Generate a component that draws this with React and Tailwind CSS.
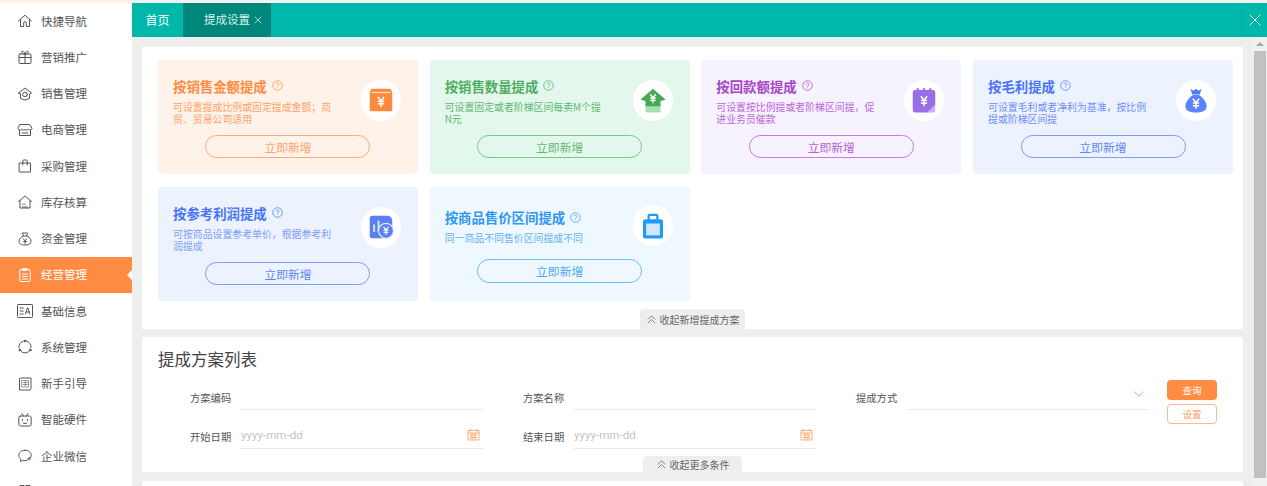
import { ChevronDown, X } from "lucide-react";

const Svg = ({ children, size = 16, vb = "0 0 16 16", stroke = "currentColor" }) => (
  <svg width={size} height={size} viewBox={vb} fill="none" stroke={stroke} strokeWidth="1" strokeLinejoin="round" strokeLinecap="round">
    {children}
  </svg>
);

// 菜单图标
const menuIcons = {
  home: <><path d="M1.500 8 8 2.200 14.500 8" /><path d="M3.500 6.800v6.700h3.200V10a1.300 1.300 0 0 1 2.600 0v3.500h3.200V6.800" /></>,
  gift: <><rect x="2" y="5" width="12" height="9.500" rx="1" /><path d="M2 8.500h12M8 5v9.500" /><path d="M8 5C6 5 4.600 4.200 4.600 3s2.400-1.600 3.400 2c1-3.600 3.400-3.200 3.400-2S10 5 8 5Z" /></>,
  sale: <><path d="M1.500 7 8 2l6.500 5-2 1v4.500L8 14l-4.500-1.500V8Z" /><circle cx="8" cy="8.500" r="2.300" /></>,
  store: <><path d="M3.200 2.500h9.600L15 6.500a2 2 0 0 1-3.500.8 2.600 2.600 0 0 1-3.500.2 2.600 2.600 0 0 1-3.500-.2A2 2 0 0 1 1 6.500Z" /><path d="M2.500 8v5.500h11V8M5 11h6" /></>,
  bag: <><path d="M2.500 5h11v9h-11Z" /><path d="M5.800 7V3a1 1 0 0 1 1-1h2.400a1 1 0 0 1 1 1v4" /></>,
  stock: <><path d="M1.500 7.500 8 2l6.500 5.500" /><path d="M3 6.500V14h10V6.500" /><path d="M6 13.500v-1M8 13.500v-1M10 13.500v-1M6 10.500v-.5M8 10.500v-.5" /></>,
  money: <><path d="M5.500 2h5L9.600 5c3 1 4.400 3.200 4.400 5.400 0 2.400-2 3.600-6 3.600s-6-1.200-6-3.600C2 8.200 3.400 6 6.400 5Z" /><path d="M6.500 5h3M6.300 7.800 8 9.800l1.700-2M8 9.800v2.500M6.500 10.500h3" /></>,
  clip: <><rect x="2.800" y="2.500" width="10.400" height="12" rx="1.200" /><path d="M6 1.500h4v2H6ZM5.500 7h5M5.500 9.500h5M5.500 12h5" /></>,
  info: <><rect x="0.500" y="1.500" width="15" height="13" rx="0.800" /><path d="M3 5h3.300M3 8h3.300M3 11h3.300M8.500 11l1.800-6h.7l1.800 6M9.200 9h3.400" /></>,
  sys: <><path d="M10 2.300A6 6 0 0 1 14 8.500M12 12.500a6 6 0 0 1-8 0M2 8.500A6 6 0 0 1 6 2.300" /><circle cx="8" cy="2" r="0.900" fill="currentColor" /><circle cx="2.800" cy="11" r="0.900" fill="currentColor" /><circle cx="13.200" cy="11" r="0.900" fill="currentColor" /></>,
  guide: <><path d="M3.500 2h10.500v10.500L13 14H2.500V3Z" /><rect x="5" y="4.500" width="6.500" height="6.500" strokeWidth="0.600" /><path d="M6 6.500h4.500M6 8.500h4.500M8.200 5.500v4.500" strokeWidth="0.600" /></>,
  tv: <><rect x="1.800" y="4" width="12.400" height="10" rx="1.800" /><path d="M5 1.500 6.500 4M11 1.500 9.500 4M5.500 7.500v1M10.500 7.500v1M6 11c1.200.8 2.800.8 4 0" /></>,
  chat: <><path d="M8 2.200c3.600 0 6.200 2.200 6.200 5 0 1-.3 1.800-.9 2.600M10 12.300c-.7.200-1.300.3-2 .3-.8 0-1.500-.1-2.200-.3l-2.300 1.200.3-2.300C2.600 10.200 1.800 8.800 1.800 7.200c0-2.800 2.600-5 6.200-5" /><path d="M11 10.700a1.100 1.100 0 1 0 2.200 0 1.100 1.100 0 1 0-2.200 0" /></>,
  more: <><path d="M3 4.500v-3h4M13 4.500v-3H9" /></>,
};

const menus = [
  ["home", "快捷导航"],
  ["gift", "营销推广"],
  ["sale", "销售管理"],
  ["store", "电商管理"],
  ["bag", "采购管理"],
  ["stock", "库存核算"],
  ["money", "资金管理"],
  ["clip", "经营管理"],
  ["info", "基础信息"],
  ["sys", "系统管理"],
  ["guide", "新手引导"],
  ["tv", "智能硬件"],
  ["chat", "企业微信"],
];

const Yen = ({ x = 12, y = 12, s = 1, color = "#fff" }) => (
  <path
    transform={`translate(${x} ${y}) scale(${s})`}
    d="M-2.500 -4 0 -.8 2.500 -4M-2.500 -.6h5M-2.500 1.500h5M0 -.8V4"
    stroke={color}
    strokeWidth="1.200"
    fill="none"
  />
);

// 卡片里的图标
const cardIcons = {
  box: (
    <>
      <path d="M3 6 4 3.500a1 1 0 0 1 1-.5h14a1 1 0 0 1 1 .5L21 6v14a1 1 0 0 1-1 1H4a1 1 0 0 1-1-1Z" fill="#ff8a3d" />
      <path d="M4.500 6h15" stroke="#ffe2cf" strokeWidth="1" />
      <Yen y={13.500} />
    </>
  ),
  house: (
    <>
      <path d="M6 15h12v6a1 1 0 0 1-1 1H7a1 1 0 0 1-1-1Z" fill="#a6dfb0" />
      <path d="M12 3 22 11.500l-4 1.500v4H6v-4L2 11.500Z" fill="#46a857" />
      <Yen y={11} s={0.9} />
    </>
  ),
  calendar: (
    <>
      <path d="M3 6a2 2 0 0 1 2-2h14a2 2 0 0 1 2 2v10l-6 6H5a2 2 0 0 1-2-2Z" fill="#9a6ee6" />
      <path d="M21 15.500 14.500 22H19a2 2 0 0 0 2-2Z" fill="#c9aff2" />
      <path d="M7 2.500v3.500M12 2.500v3.500M17 2.500v3.500" stroke="#9a6ee6" strokeWidth="1.800" />
      <Yen y={13} />
    </>
  ),
  sack: (
    <>
      <path d="M7.500 3 10 4.500 12 3l2 1.500L16.500 3 15 7.500H9Z" fill="#4f7bf7" />
      <path d="M9.500 8h5C18 10.500 20.500 14 20.500 17c0 3-2.500 5-8.500 5s-8.500-2-8.500-5c0-3 2.500-6.500 6-9Z" fill="#5a84f8" />
      <Yen y={15} />
    </>
  ),
  chart: (
    <>
      <path d="M3 5a2 2 0 0 1 2-2h12a4 4 0 0 1 4 4v10a4 4 0 0 1-4 4H5a2 2 0 0 1-2-2Z" fill="#5a7ff0" />
      <path d="M6.500 16V10M10 16V7" stroke="#dfe7ff" strokeWidth="1.500" />
      <circle cx="16" cy="15" r="6" fill="#5a7ff0" stroke="#dfe7ff" strokeWidth="1" />
      <Yen x={16} y={15} s={0.8} />
    </>
  ),
  bag: (
    <>
      <path d="M8.500 7V4a1 1 0 0 1 1-1h5a1 1 0 0 1 1 1v3" stroke="#1d9bf5" strokeWidth="1.800" fill="none" />
      <rect x="4" y="6.500" width="16" height="15.500" rx="2" fill="#1d9bf5" />
      <rect x="6.500" y="10" width="11" height="9.500" fill="#cfe8fd" />
    </>
  ),
};

const cards = [
  {
    title: "按销售金额提成",
    desc: "可设置提成比例或固定提成金额\uFF1B商贸、贸易公司适用",
    icon: "box",
    box: "bg-[#fff2e9]",
    head: "text-[#ff8b40]",
    text: "text-[#ffa26a]",
    btn: "mt-[10px] border-[#ffab78] text-[#ffa26a]",
  },
  {
    title: "按销售数量提成",
    desc: "可设置固定或者阶梯区间每卖M个提N元",
    icon: "house",
    box: "bg-[#e3f7ec]",
    head: "text-[#4fae5f]",
    text: "text-[#62b873]",
    btn: "mt-[10px] border-[#78c888] text-[#62b873]",
  },
  {
    title: "按回款额提成",
    desc: "可设置按比例提或者阶梯区间提\uFF0C促进业务员催款",
    icon: "calendar",
    box: "bg-[#f6f2fe]",
    head: "text-[#a846c9]",
    text: "text-[#bd66dc]",
    btn: "mt-[10px] border-[#c77ae2] text-[#b95fd8]",
  },
  {
    title: "按毛利提成",
    desc: "可设置毛利或者净利为基准\uFF0C按比例提或阶梯区间提",
    icon: "sack",
    box: "bg-[#edf2ff]",
    head: "text-[#4a74f6]",
    text: "text-[#6f90f8]",
    btn: "mt-[10px] border-[#7c9dfa] text-[#5f85f7]",
  },
  {
    title: "按参考利润提成",
    desc: "可按商品设置参考单价\uFF0C根据参考利润提成",
    icon: "chart",
    box: "bg-[#edf2ff]",
    head: "text-[#4a74f6]",
    text: "text-[#7f9cf8]",
    btn: "mt-[10px] border-[#7c9dfa] text-[#5f85f7]",
  },
  {
    title: "按商品售价区间提成",
    desc: "同一商品不同售价区间提成不同",
    icon: "bag",
    box: "bg-[#f0f8ff]",
    head: "text-[#2f97f5]",
    text: "text-[#62b2fa]",
    btn: "mt-[13px] border-[#68bdfb] text-[#48a8f8]",
  },
];

const Help = () => (
  <svg width="11" height="11" viewBox="0 0 12 12" fill="none" stroke="currentColor" strokeWidth="0.800">
    <circle cx="6" cy="6" r="5.200" />
    <path d="M4.500 4.800a1.500 1.500 0 1 1 2.300 1.300c-.5.300-.8.600-.8 1.100M6 8.300v.6" />
  </svg>
);

const UpDouble = () => (
  <svg width="11" height="11" viewBox="0 0 12 12" fill="none" stroke="#777" strokeWidth="1">
    <path d="M2 6 6 2l4 4M2 10l4-4 4 4" />
  </svg>
);

const DateIcon = () => (
  <svg width="13" height="13" viewBox="0 0 13 13" fill="none" stroke="#ffa468" strokeWidth="0.900" className="mr-[3px] -mt-[3px]">
    <path d="M1 2.500h11v9.500H1ZM3.500 1v2.500M9.500 1v2.500M1 5h11M3 7h7M3 9.500h7M5 5v7M8 5v7" />
  </svg>
);

const Card = ({ item }) => (
  <div className={`h-[114px] rounded flex flex-col justify-center px-[15px] ${item.box}`}>
    <div className="flex items-center justify-between">
      <div className="w-[160px]">
        <div className={`flex items-center gap-[5px] text-[13.400px] font-bold leading-[20px] whitespace-nowrap ${item.head}`}>
          {item.title}
          <Help />
        </div>
        <p className={`mt-[5px] text-[9.900px] leading-[12px] ${item.text}`}>{item.desc}</p>
      </div>
      <div className="mr-[2px] w-[40px] h-[41px] rounded-full bg-white flex items-center justify-center">
        <svg width="30" height="30" viewBox="0 0 24 24">{cardIcons[item.icon]}</svg>
      </div>
    </div>
    <button className={`mx-auto w-[165px] h-[23.500px] rounded-full border text-[11.800px] leading-none ${item.btn}`}>
      立即新增
    </button>
  </div>
);

const Field = ({ label, placeholder, date, select }) => (
  <div className="flex items-center w-[293px] h-[25px]">
    <label className="w-[42px] shrink-0 text-[10.300px] text-[#555] whitespace-nowrap">{label}</label>
    <div className="ml-[9px] flex-1 h-full flex items-center justify-between border-b border-[#e8e8e8]">
      <input
        className="w-[150px] text-[11.600px] text-[#555] outline-none placeholder:text-[#c4c4c4] font-['Roboto',sans-serif]"
        placeholder={placeholder}
      />
      {date && <DateIcon />}
      {select && <ChevronDown size={18} strokeWidth={1.300} className="text-[#ff9a5c] -mt-[6px] mr-[1px]" />}
    </div>
  </div>
);

const App = () => {
  return (
    <div className="w-full h-screen flex overflow-hidden bg-[#eeeeee] font-['Noto_Sans_CJK_SC','Noto_Sans',sans-serif]">
      <aside className="w-[132px] shrink-0 bg-white pt-[3px] relative overflow-hidden">
        <div className="absolute top-0 left-0 w-full h-[3px] bg-[#fff2ea]" />
        {menus.map(([icon, name]) => {
          const active = name === "经营管理";
          return (
            <div
              key={name}
              className={`relative h-[36.250px] flex items-center pl-[17px] gap-[8px] text-[11.500px] ${active ? "bg-[#ff8c42] text-white" : "text-[#555]"}`}
            >
              <Svg>{menuIcons[icon]}</Svg>
              <span>{name}</span>
              {active && (
                <span className="absolute right-0 top-[13px] border-y-[5px] border-r-[5px] border-y-transparent border-r-white" />
              )}
            </div>
          );
        })}
        <div className="h-[36.250px] flex items-center pl-[17px] text-[#555]">
          <Svg>{menuIcons.more}</Svg>
        </div>
      </aside>

      <div className="flex-1 min-w-0 flex flex-col">
        <div className="h-[3px] bg-[#f2f2f2] shrink-0" />
        <header className="h-[34px] shrink-0 bg-[#00b8a9] flex items-stretch text-white">
          <div className="w-[51px] flex items-center justify-center text-[12px]">首页</div>
          <div className="w-[88px] bg-[#00877c] flex items-center pl-[21px] gap-[2px] text-[11.500px] text-[#d8f1ee]">
            提成设置
            <X size={12} strokeWidth={1.300} className="text-white" />
          </div>
          <div className="ml-auto w-[26px] border-l border-[#00aa9c] flex items-center justify-center">
            <X size={20} strokeWidth={1.200} />
          </div>
        </header>

        <div className="flex-1 min-h-0 flex">
          <main className="flex-1 min-w-0 pt-[10px] px-[10px] overflow-hidden">
            <section className="bg-white pt-[13px] pl-[16px] pr-[10px]">
              <div className="grid grid-cols-4 gap-x-[11.700px] gap-y-[13px]">
                {cards.map((item) => (
                  <Card key={item.title} item={item} />
                ))}
              </div>
              <div className="mt-[8px] mx-auto -translate-x-[3px] w-[105px] h-[20px] rounded-t bg-[#eeeeee] flex items-center justify-center gap-[3px] text-[10px] text-[#666]">
                <UpDouble />
                收起新增提成方案
              </div>
            </section>

            <section className="mt-[8px] bg-white h-[135px] flex flex-col">
              <h2 className="pl-[16px] pt-[10px] text-[16.500px] leading-[24px] text-[#444]">提成方案列表</h2>
              <div className="mt-[14px] pl-[48px] flex gap-[18px]">
                <div className="w-[959px] flex flex-wrap gap-x-[40px] gap-y-[14px]">
                  <Field label="方案编码" />
                  <Field label="方案名称" />
                  <Field label="提成方式" select />
                  <Field label="开始日期" placeholder="yyyy-mm-dd" date />
                  <Field label="结束日期" placeholder="yyyy-mm-dd" date />
                </div>
                <div className="-mt-[5px] flex flex-col gap-[4px]">
                  <button className="w-[50px] h-[20px] rounded-sm bg-[#ff8c42] text-white text-[9.500px]">查询</button>
                  <button className="w-[50px] h-[19.500px] rounded-sm border border-[#ffb88a] text-[#ffa468] text-[9.500px]">设置</button>
                </div>
              </div>
              <div className="mt-auto mx-auto w-[99px] h-[16px] rounded-t bg-[#eeeeee] flex items-center justify-center gap-[3px] text-[10px] text-[#666]">
                <UpDouble />
                收起更多条件
              </div>
            </section>

            <section className="mt-[9px] bg-white h-[60px]" />
          </main>

          <div className="w-[14px] shrink-0 bg-[#f1f1f1] relative">
            <span className="absolute top-[5px] left-[3px] border-x-[4px] border-b-[4px] border-x-transparent border-b-[#a8a8a8]" />
            <div className="absolute top-[14px] left-[1px] w-[12px] h-[427px] bg-[#c1c1c1]" />
          </div>
        </div>
      </div>
    </div>
  );
};

export default App;
